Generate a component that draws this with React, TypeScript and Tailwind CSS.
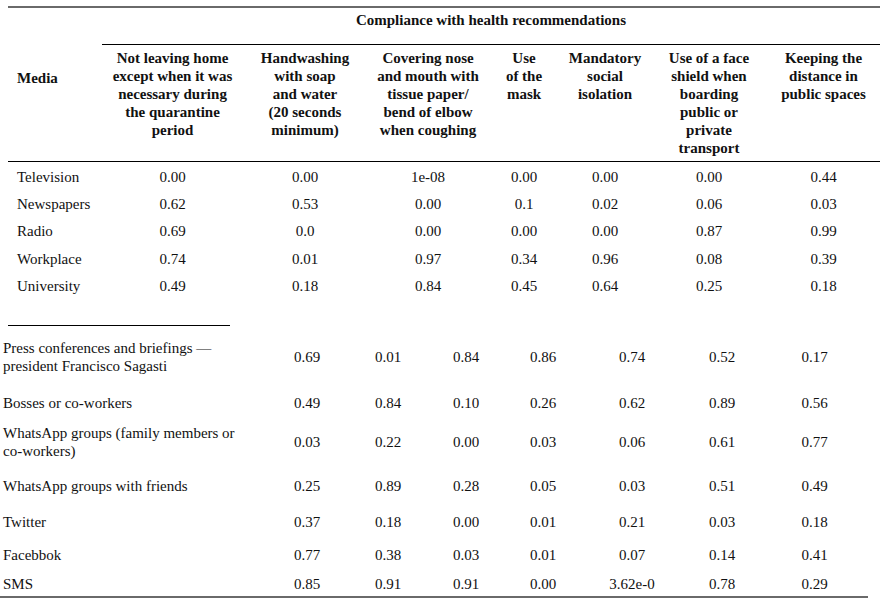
import React from "react";

const topCols = "grid grid-cols-[94px_141px_124px_122px_70px_92px_116px_113px]";
const botCols = "grid grid-cols-[265px_84px_78px_78px_76px_102px_78px_107px]";

const headers: React.ReactNode[] = [
  <>Not leaving home<br />except when it was<br />necessary during<br />the quarantine<br />period</>,
  <>Handwashing<br />with soap<br />and water<br />(20 seconds<br />minimum)</>,
  <>Covering nose<br />and mouth with<br />tissue paper/<br />bend of elbow<br />when coughing</>,
  <>Use<br />of the<br />mask</>,
  <>Mandatory<br />social<br />isolation</>,
  <>Use of a face<br />shield when<br />boarding<br />public or<br />private<br />transport</>,
  <>Keeping the<br />distance in<br />public spaces</>,
];

const topRows: [string, string[]][] = [
  ["Television", ["0.00", "0.00", "1e-08", "0.00", "0.00", "0.00", "0.44"]],
  ["Newspapers", ["0.62", "0.53", "0.00", "0.1", "0.02", "0.06", "0.03"]],
  ["Radio", ["0.69", "0.0", "0.00", "0.00", "0.00", "0.87", "0.99"]],
  ["Workplace", ["0.74", "0.01", "0.97", "0.34", "0.96", "0.08", "0.39"]],
  ["University", ["0.49", "0.18", "0.84", "0.45", "0.64", "0.25", "0.18"]],
];

const botRows: [React.ReactNode, string[], string][] = [
  [<>Press conferences and briefings —<br />president Francisco Sagasti</>, ["0.69", "0.01", "0.84", "0.86", "0.74", "0.52", "0.17"], "h-[62px]"],
  ["Bosses or co-workers", ["0.49", "0.84", "0.10", "0.26", "0.62", "0.89", "0.56"], "h-[30px]"],
  [<>WhatsApp groups (family members or<br />co-workers)</>, ["0.03", "0.22", "0.00", "0.03", "0.06", "0.61", "0.77"], "h-[48px]"],
  ["WhatsApp groups with friends", ["0.25", "0.89", "0.28", "0.05", "0.03", "0.51", "0.49"], "h-[40px]"],
  ["Twitter", ["0.37", "0.18", "0.00", "0.01", "0.21", "0.03", "0.18"], "h-[32px]"],
  ["Facebbok", ["0.77", "0.38", "0.03", "0.01", "0.07", "0.14", "0.41"], "h-[34px]"],
  ["SMS", ["0.85", "0.91", "0.91", "0.00", "3.62e-0", "0.78", "0.29"], "h-[24px]"],
];

export default function App() {
  return (
    <div
      className="w-[887px] h-[606px] bg-white text-[#111] text-[15px] leading-[18px] overflow-hidden"
      style={{ fontFamily: '"Liberation Serif", "Times New Roman", serif' }}
    >
      {/* Top table */}
      <div className="ml-[8px] mt-[6px] w-[872px] border-t-2 border-[#6a6a6a]">
        <div className={`${topCols} border-b border-black`}>
          <div className="row-span-2 pt-[61px] pl-[9px] font-bold">Media</div>
          <div className="col-span-7 h-[37px] pt-[3px] border-b border-black text-center font-bold">
            Compliance with health recommendations
          </div>
          {headers.map((h, i) => (
            <div key={i} className="h-[116px] pt-[4px] text-center font-bold whitespace-nowrap">
              {h}
            </div>
          ))}
        </div>
        <div className="pt-[1px]">
          {topRows.map(([label, vals]) => (
            <div key={label} className={`${topCols} h-[27.4px] items-center`}>
              <div className="pl-[9px]">{label}</div>
              {vals.map((v, i) => (
                <div key={i} className="text-center">{v}</div>
              ))}
            </div>
          ))}
        </div>
      </div>

      <div className="ml-[8px] mt-[25px] w-[222px] border-t border-black" />

      {/* Bottom table */}
      <div className="w-[868px] border-b-2 border-[#6a6a6a]">
        {botRows.map(([label, vals, h], r) => (
          <div key={r} className={`${botCols} ${h} items-center`}>
            <div className="pl-[3px] whitespace-nowrap">{label}</div>
            {vals.map((v, i) => (
              <div key={i} className="text-center">{v}</div>
            ))}
          </div>
        ))}
      </div>
    </div>
  );
}
